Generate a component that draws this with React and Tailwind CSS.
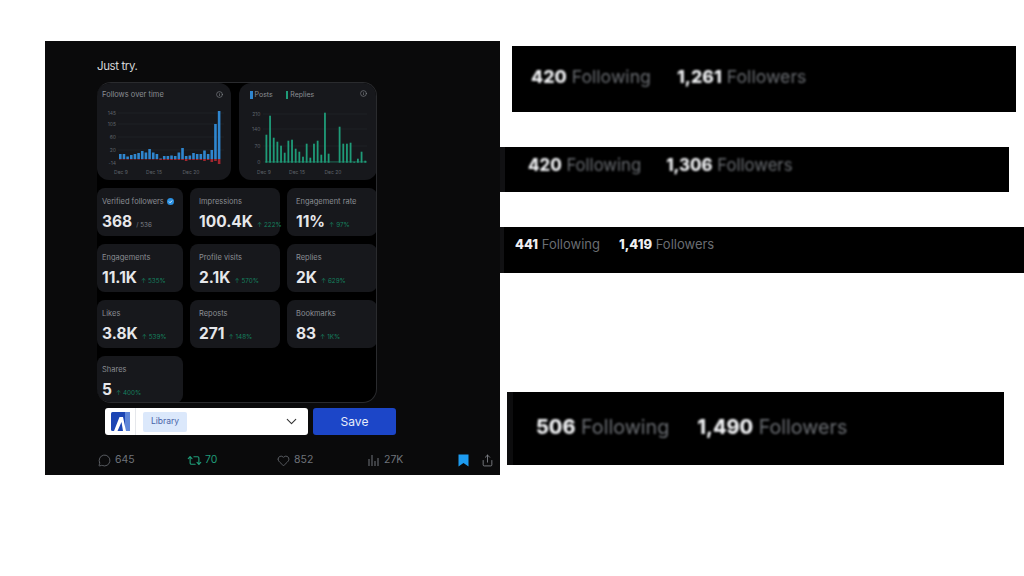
import React from 'react';
import { ChevronDown, Heart, Info, MessageCircle, Repeat2, Share } from 'lucide-react';

const followBars = [5, 5, 2.5, 4, 5, 6, 8, 6.5, 10, 6.5, 5, 0.5, 3, 3, 3.5, 3, 6.5, 11, 3, 3.5, 6, 5, 5, 8.5, 5, 9, 35, 48];
const followLoss = [0.5, 0.5, 0.5, 0.5, 0.5, 0.5, 0.5, 0.5, 0.5, 0.5, 0.5, 1, 1, 1, 1, 1, 1, 1, 2, 1, 1, 1, 1, 2, 1, 3, 2, 5];
const replyBars = [28, 47, 25, 21, 17, 10, 22, 23, 14, 11, 6, 19, 5, 19, 22, 8, 50, 9, 0, 0, 36, 19, 19, 20, 1, 4, 11, 2];

const stats = [
  { label: 'Verified followers', value: '368', suffix: '/ 536', verified: true },
  { label: 'Impressions', value: '100.4K', delta: '222%' },
  { label: 'Engagement rate', value: '11%', delta: '97%' },
  { label: 'Engagements', value: '11.1K', delta: '535%' },
  { label: 'Profile visits', value: '2.1K', delta: '570%' },
  { label: 'Replies', value: '2K', delta: '629%' },
  { label: 'Likes', value: '3.8K', delta: '539%' },
  { label: 'Reposts', value: '271', delta: '148%' },
  { label: 'Bookmarks', value: '83', delta: '1K%' },
  { label: 'Shares', value: '5', delta: '400%' },
];

const FollowsChart = () => (
  <svg width="134" height="76" viewBox="0 0 134 76" className="block">
    {[9, 20, 33, 46].map((y) => (
      <line key={y} x1="21" x2="127" y1={y} y2={y} stroke="#26282d" strokeWidth="0.5" />
    ))}
    {[['145', 10.5], ['105', 22], ['60', 35], ['20', 48], ['-14', 60.5]].map(([t, y]) => (
      <text key={t} x="19" y={y} textAnchor="end" fontSize="5" fill="#5f636b">{t}</text>
    ))}
    {followBars.map((h, i) => (
      <g key={i}>
        <rect x={22 + i * 3.66} y={55 - h} width="2.6" height={h} fill="#2f86cf" />
        <rect x={22 + i * 3.66} y="55" width="2.6" height={followLoss[i]} fill="#a3262f" />
      </g>
    ))}
    {[['Dec 9', 24], ['Dec 15', 57], ['Dec 20', 94]].map(([t, x]) => (
      <text key={t} x={x} y="69.5" textAnchor="middle" fontSize="5" fill="#5f636b">{t}</text>
    ))}
  </svg>
);

const PostsChart = () => (
  <svg width="138" height="76" viewBox="0 0 138 76" className="block">
    {[10, 25, 42, 58].map((y) => (
      <line key={y} x1="24" x2="128" y1={y} y2={y} stroke="#26282d" strokeWidth="0.5" />
    ))}
    {[['210', 12], ['140', 27], ['70', 44], ['0', 60]].map(([t, y]) => (
      <text key={t} x="21.5" y={y} textAnchor="end" fontSize="5" fill="#5f636b">{t}</text>
    ))}
    <rect x="26" y="57" width="102" height="1.7" fill="#1c6f58" opacity="0.55" />
    {replyBars.map((h, i) => (
      <rect key={i} x={26.5 + i * 3.66} y={58.7 - h} width="1.8" height={h} fill="#1f9b78" />
    ))}
    {[['Dec 9', 25], ['Dec 15', 58], ['Dec 20', 94]].map(([t, x]) => (
      <text key={t} x={x} y="69.5" textAnchor="middle" fontSize="5" fill="#5f636b">{t}</text>
    ))}
  </svg>
);

const StatTile = ({ label, value, suffix, delta, verified, first }) => (
  <div className={`bg-[#17181c] rounded-lg pt-[8px] h-full ${first ? 'pl-[5px]' : 'pl-[9px]'}`}>
    <div className="flex items-center gap-[3px] h-[11px] text-[7.5px] leading-none text-[#8a8d93] whitespace-nowrap">
      {label}
      {verified && (
        <svg width="7" height="7" viewBox="0 0 10 10">
          <circle cx="5" cy="5" r="5" fill="#2a8fe0" />
          <path d="M2.8 5.1 4.4 6.7 7.3 3.6" fill="none" stroke="white" strokeWidth="1.3" />
        </svg>
      )}
    </div>
    <div className="flex items-baseline mt-[5px] whitespace-nowrap">
      <span className="text-[15.5px] leading-[20px] font-bold text-[#e6e7ea]">{value}</span>
      {suffix && <span className="ml-[4px] text-[6.3px] text-[#7d8189]">{suffix}</span>}
      {delta && <span className="ml-[4px] text-[6.3px] text-[#15805f]">↑ {delta}</span>}
    </div>
  </div>
);

const ActionRow = () => (
  <div className="flex items-center mt-[18px] ml-[1px] h-[14px] text-[10.5px] text-[#6f737a]">
    <div className="flex items-center gap-[4px] w-[89px]">
      <MessageCircle size={13} strokeWidth={1.4} />
      <span>645</span>
    </div>
    <div className="flex items-center gap-[3px] w-[90px] text-[#1f9b78]">
      <Repeat2 size={15} strokeWidth={1.8} />
      <span>70</span>
    </div>
    <div className="flex items-center gap-[4px] w-[91px]">
      <Heart size={13} strokeWidth={1.4} />
      <span>852</span>
    </div>
    <div className="flex items-center gap-[4px] w-[90px]">
      <svg width="12" height="12" viewBox="0 0 12 12" fill="#6f737a">
        <rect x="0.5" y="5" width="1" height="7" />
        <rect x="3.5" y="1" width="1" height="11" />
        <rect x="6.5" y="7" width="1" height="5" />
        <rect x="9.5" y="4" width="1" height="8" />
      </svg>
      <span>27K</span>
    </div>
    <svg width="11" height="13" viewBox="0 0 11 13" className="mr-[12px]">
      <path d="M0.5 0.5h10v12L5.5 9l-5 3.5z" fill="#1d9bf0" />
    </svg>
    <Share size={13} strokeWidth={1.5} className="text-[#8a8d93]" />
  </div>
);

const SaveBar = () => (
  <div className="flex mt-[5px] ml-[8px] h-[27px]">
    <div className="flex items-center w-[203px] bg-white rounded-[3px]">
      <div className="flex items-center justify-center w-[31px] h-full border-r border-[#e5e7eb]">
        <svg width="19" height="19" viewBox="0 0 19 19">
          <rect width="19" height="19" rx="1.5" fill="#1c45b4" />
          <rect x="14" y="0" width="5" height="19" fill="#5f86d8" />
          <path d="M3 19 8.5 5H12L15 19H12L10.5 10 6.5 19z" fill="white" />
        </svg>
      </div>
      <div className="flex items-center justify-center ml-[7px] w-[44px] h-[20px] bg-[#dbe8fb] rounded-[2px] text-[8.5px] text-[#4763a8]">
        Library
      </div>
      <ChevronDown size={17} strokeWidth={1.5} className="ml-auto mr-[8px] text-[#333]" />
    </div>
    <button className="ml-[5px] w-[83px] bg-[#1c46c8] rounded-[3px] text-[12px] text-[#e8edfa]">Save</button>
  </div>
);

const FollowRow = ({ following, followers, size, gap }) => (
  <div className={`flex items-center ${size} ${gap}`}>
    <span>
      <b className="font-extrabold text-[#eeeff1]">{following}</b>
      <span className="text-[#6a6d72]"> Following</span>
    </span>
    <span>
      <b className="font-extrabold text-[#eeeff1]">{followers}</b>
      <span className="text-[#6a6d72]"> Followers</span>
    </span>
  </div>
);

export default function App() {
  return (
    <div className="flex items-start w-[1024px] h-[576px] bg-white overflow-hidden font-['Inter',sans-serif]">
      {/* Post */}
      <div className="ml-[45px] mt-[41px] w-[455px] h-[434px] bg-[#0a0a0b] pl-[52px] pt-[17px]">
        <div className="h-[16px] text-[11.5px] leading-[16px] tracking-[-0.4px] text-[#d5d6d8]">Just try.</div>
        <div className="mt-[8px] w-[280px] h-[321px] bg-black border border-[#2a2b2e] border-l-0 rounded-[14px] overflow-hidden">
          <div className="flex gap-[8px] h-[97px]">
            <div className="w-[134px] bg-[#17181c] rounded-xl">
              <div className="flex items-center justify-between h-[21px] pt-[2px] pl-[5px] pr-[8px] text-[7.5px] text-[#8a8d93]">
                Follows over time
                <Info size={7} />
              </div>
              <FollowsChart />
            </div>
            <div className="w-[138px] bg-[#17181c] rounded-xl">
              <div className="flex items-center h-[21px] pt-[3px] pl-[11px] pr-[10px] text-[7px] text-[#8a8d93]">
                <span className="w-[2.5px] h-[8px] mr-[2px] bg-[#2f86cf]"></span>
                Posts
                <span className="w-[2.5px] h-[8px] ml-[13px] mr-[2px] bg-[#1f9b78]"></span>
                Replies
                <Info size={7} className="ml-auto -mt-[3px]" />
              </div>
              <PostsChart />
            </div>
          </div>
          <div className="grid grid-cols-[86px_90px_90px] grid-rows-[48px_48px_48px_47px] gap-x-[7px] gap-y-[8px] mt-[8px]">
            {stats.map((s, i) => (
              <StatTile key={s.label} first={i % 3 === 0} {...s} />
            ))}
          </div>
        </div>
        <SaveBar />
        <ActionRow />
      </div>

      {/* Follower counts */}
      <div className="flex flex-col w-[524px]">
        <div className="flex items-center ml-[12px] mt-[46px] w-[504px] h-[66px] pl-[19px] pb-[3px] bg-black">
          <FollowRow following="420" followers="1,261" size="text-[17.7px] blur-[0.8px]" gap="gap-[26px]" />
        </div>
        <div className="flex items-center mt-[35px] w-[509px] h-[45px] pl-[23px] pb-[8px] bg-black border-l-[5px] border-[#111113]">
          <FollowRow following="420" followers="1,306" size="text-[16.7px] blur-[0.8px]" gap="gap-[25px]" />
        </div>
        <div className="flex items-center mt-[35px] w-[524px] h-[46px] pl-[11px] pb-[10px] bg-black border-l-[4px] border-[#111113]">
          <FollowRow following="441" followers="1,419" size="text-[13px]" gap="gap-[19px]" />
        </div>
        <div className="flex items-center ml-[7px] mt-[119px] w-[497px] h-[73px] pl-[23px] pb-[1px] bg-black border-l-[6px] border-[#0c0c0d]">
          <FollowRow following="506" followers="1,490" size="text-[19.7px] blur-[0.8px]" gap="gap-[28px]" />
        </div>
      </div>
    </div>
  );
}
